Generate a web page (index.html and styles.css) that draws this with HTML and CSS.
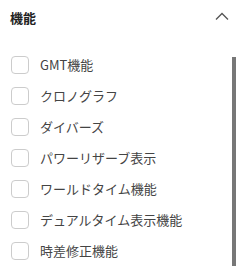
FILE: index.html
```html
<!DOCTYPE html>
<html lang="ja">
<head>
    <meta charset="UTF-8">
    <title>機能</title>
    <link rel="stylesheet" href="styles.css">
</head>
<body>
    <section class="filter">
        <div class="filter-head">
            <h2>機能</h2>
            <svg class="chevron" width="14" height="8" viewBox="0 0 14 8">
                <path d="M1 7.5 L7 1.5 L13 7.5" fill="none" stroke="#555" stroke-width="1.3"/>
            </svg>
        </div>
        <div class="filter-body">
            <ul class="options">
                <li><span class="box"></span>GMT機能</li>
                <li><span class="box"></span>クロノグラフ</li>
                <li><span class="box"></span>ダイバーズ</li>
                <li><span class="box"></span>パワーリザーブ表示</li>
                <li><span class="box"></span>ワールドタイム機能</li>
                <li><span class="box"></span>デュアルタイム表示機能</li>
                <li><span class="box"></span>時差修正機能</li>
            </ul>
            <div class="scroll-thumb"></div>
        </div>
    </section>
</body>
</html>
```

FILE: styles.css
```css
body {
    margin: 0;
    background: #fff;
    font-family: "Noto Sans CJK JP", "Noto Sans", sans-serif;
    color: #333;
}
.filter {
    width: 237px;
}
.filter-head {
    display: flex;
    justify-content: space-between;
    align-items: center;
    padding: 3px 8px 0 10px;
    height: 28px;
}
.filter-head h2 {
    margin: 0;
    font-size: 13px;
    font-weight: bold;
    color: #222;
}
.chevron {
    margin-top: -3px;
}
.filter-body {
    position: relative;
    margin-top: 18px;
}
.options {
    list-style: none;
    margin: 0;
    padding: 0 0 0 11px;
}
.options li {
    display: flex;
    align-items: center;
    height: 31px;
    font-size: 13px;
    color: #444;
}
.box {
    width: 16px;
    height: 16px;
    border: 1px solid #ccc;
    border-radius: 4px;
    margin-right: 11px;
}
.scroll-thumb {
    position: absolute;
    top: 8px;
    right: 1px;
    width: 4px;
    height: 213px;
    background: #777;
}
```
